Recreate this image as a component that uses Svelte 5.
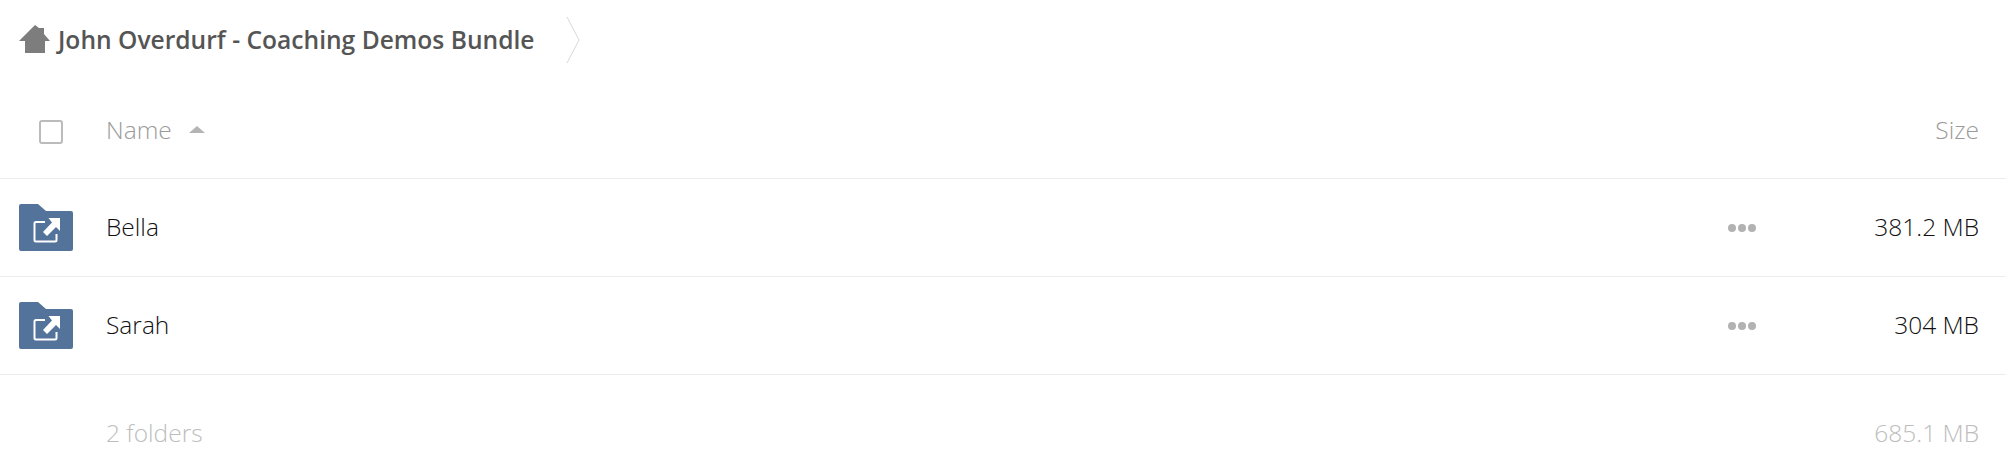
<script lang="ts">
	const folders = [
		{ name: 'Bella', size: '381.2 MB' },
		{ name: 'Sarah', size: '304 MB' }
	];
</script>

<div class="files">
	<nav class="crumbs">
		<svg class="home" viewBox="0 0 31 28" aria-hidden="true">
			<path d="M16 0 L20 3 H25 V9 L31 16 H26 V28 H6 V16 H0 Z" />
		</svg>
		<span class="title">John Overdurf - Coaching Demos Bundle</span>
		<svg class="sep" viewBox="0 0 14 46" aria-hidden="true">
			<path d="M1 0 L13 23 L1 46" />
		</svg>
	</nav>

	<div class="row head">
		<div class="check"><span class="box"></span></div>
		<div class="name">Name <span class="caret"></span></div>
		<div class="size">Size</div>
	</div>

	{#each folders as f}
		<div class="row item">
			<div class="check">
				<svg class="folder" viewBox="0 0 54 47" aria-hidden="true">
					<path fill="#54739b" d="M2 0 H19 L27 7 H52 a2 2 0 0 1 2 2 V45 a2 2 0 0 1 -2 2 H2 a2 2 0 0 1 -2 -2 V2 a2 2 0 0 1 2 -2 Z" />
					<path fill="none" stroke="#fff" stroke-width="2" d="M26 18 H17 a1.500 1.500 0 0 0 -1.500 1.500 V36 a1.500 1.500 0 0 0 1.500 1.500 H36 a1.500 1.500 0 0 0 1.500 -1.500 V30" />
					<path fill="#fff" d="M41 14 V27 L37 23 L28 32 L24 28 L33 18.500 L29.500 14 Z" />
				</svg>
			</div>
			<div class="name">{f.name}</div>
			<div class="more"><i></i><i></i><i></i></div>
			<div class="size wide">{f.size}</div>
		</div>
	{/each}

	<div class="row foot">
		<div class="check"></div>
		<div class="name">2 folders</div>
		<div class="size">685.1 MB</div>
	</div>
</div>

<style>
	:global(body) {
		background: #fff;
	}

	.files {
		width: 2006px;
		height: 471px;
		overflow: hidden;
		font-family: 'Open Sans', sans-serif;
		font-weight: 300;
		font-size: 24.5px;
		color: #111;
	}

	.crumbs {
		display: flex;
		align-items: center;
		height: 79px;
		margin-bottom: 3px;
		padding-left: 19px;
	}

	.home {
		width: 31px;
		height: 28px;
		fill: #7d7d7d;
		margin-right: 8px;
		margin-top: -1px;
	}

	.title {
		font-weight: 600;
		font-size: 24.6px;
		color: #555;
	}

	.sep {
		width: 14px;
		height: 46px;
		margin-left: 32px;
		fill: none;
		stroke: #d8d8d8;
		stroke-width: 1;
	}

	.row {
		display: flex;
		align-items: center;
		padding-right: 27px;
	}

	.check {
		width: 106px;
		flex: none;
		padding-left: 19px;
		box-sizing: border-box;
		display: flex;
	}

	.name {
		flex: 1;
		display: flex;
		align-items: center;
		margin-top: -2px;
	}

	.size {
		text-align: right;
		margin-top: -2px;
	}

	.size.wide {
		width: 223px;
	}

	.head {
		height: 96px;
		border-bottom: 1px solid #ededed;
		color: #9a9a9a;
	}

	.box {
		width: 20px;
		height: 20px;
		margin: 3px 0 0 20px;
		border: 2px solid #bbb;
		border-radius: 3px;
	}

	.caret {
		width: 0;
		height: 0;
		margin-left: 17px;
		border: 8px solid transparent;
		border-top: 0;
		border-bottom: 7px solid #b4b4b4;
	}

	.item {
		height: 97px;
		border-bottom: 1px solid #ededed;
	}

	.folder {
		width: 54px;
		height: 47px;
	}

	.more {
		display: flex;
		gap: 2px;
	}

	.more i {
		width: 8px;
		height: 8px;
		border-radius: 50%;
		background: #b2b2b2;
	}

	.foot {
		height: 116px;
		color: #bdbdbd;
	}
</style>
